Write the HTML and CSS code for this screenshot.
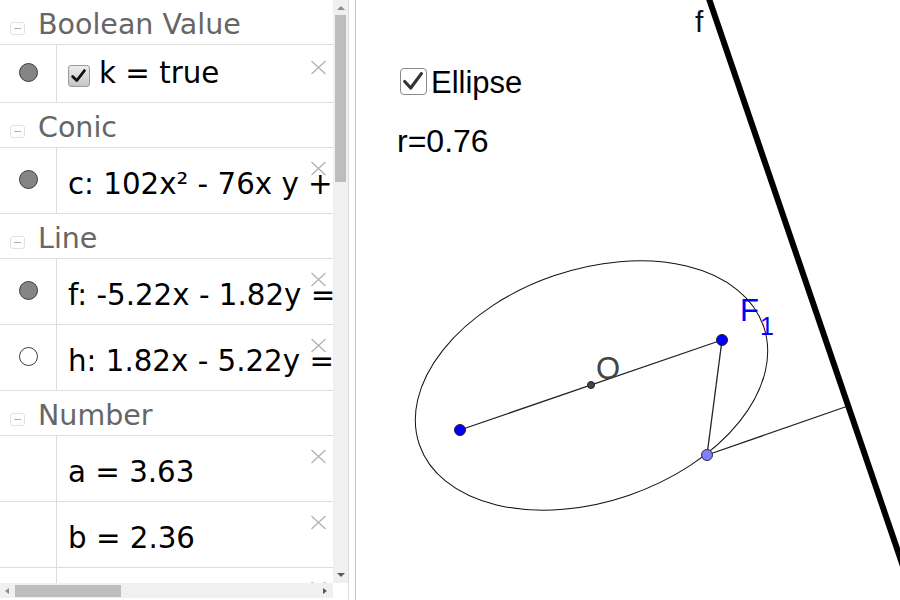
FILE: index.html
```html
<!DOCTYPE html>
<html>
<head>
<meta charset="utf-8">
<link rel="stylesheet" href="styles.css">
</head>
<body>
<div class="app">
  <div class="algebra">
    <div class="av-main">
      <div class="av-list">
        <div class="group-head"><span class="toggle"></span><span class="group-title">Boolean Value</span></div>
        <div class="item short">
          <div class="marble-cell"><span class="marble"></span></div>
          <div class="item-body">
            <span class="av-check"><svg viewBox="0 0 22 22" width="20" height="20"><path d="M4 11.5 L8.5 16 L17 5" fill="none" stroke="#111" stroke-width="3" stroke-linecap="round" stroke-linejoin="round"/></svg></span>
            <span class="expr">k = true</span>
          </div>
          <svg class="close" viewBox="0 0 17 15"><path d="M1.5 1 L15.5 14 M15.5 1 L1.5 14" stroke="#b4b4b4" stroke-width="1.4"/></svg>
        </div>
        <div class="group-head"><span class="toggle"></span><span class="group-title">Conic</span></div>
        <div class="item">
          <div class="marble-cell"><span class="marble"></span></div>
          <div class="item-body"><span class="expr">c: 102x² - 76x y + 128y² = 15920</span></div>
          <svg class="close" viewBox="0 0 17 15"><path d="M1.5 1 L15.5 14 M15.5 1 L1.5 14" stroke="#b4b4b4" stroke-width="1.4"/></svg>
        </div>
        <div class="group-head"><span class="toggle"></span><span class="group-title">Line</span></div>
        <div class="item">
          <div class="marble-cell"><span class="marble"></span></div>
          <div class="item-body"><span class="expr">f: -5.22x - 1.82y = -46.18</span></div>
          <svg class="close" viewBox="0 0 17 15"><path d="M1.5 1 L15.5 14 M15.5 1 L1.5 14" stroke="#b4b4b4" stroke-width="1.4"/></svg>
        </div>
        <div class="item">
          <div class="marble-cell"><span class="marble hollow"></span></div>
          <div class="item-body"><span class="expr">h: 1.82x - 5.22y = -20.95</span></div>
          <svg class="close" viewBox="0 0 17 15"><path d="M1.5 1 L15.5 14 M15.5 1 L1.5 14" stroke="#b4b4b4" stroke-width="1.4"/></svg>
        </div>
        <div class="group-head"><span class="toggle"></span><span class="group-title">Number</span></div>
        <div class="item">
          <div class="marble-cell"></div>
          <div class="item-body"><span class="expr">a = 3.63</span></div>
          <svg class="close" viewBox="0 0 17 15"><path d="M1.5 1 L15.5 14 M15.5 1 L1.5 14" stroke="#b4b4b4" stroke-width="1.4"/></svg>
        </div>
        <div class="item">
          <div class="marble-cell"></div>
          <div class="item-body"><span class="expr">b = 2.36</span></div>
          <svg class="close" viewBox="0 0 17 15"><path d="M1.5 1 L15.5 14 M15.5 1 L1.5 14" stroke="#b4b4b4" stroke-width="1.4"/></svg>
        </div>
        <div class="item">
          <div class="marble-cell"></div>
          <div class="item-body"><span class="expr">r = 0.76</span></div>
          <svg class="close" viewBox="0 0 17 15"><path d="M1.5 1 L15.5 14 M15.5 1 L1.5 14" stroke="#b4b4b4" stroke-width="1.4"/></svg>
        </div>
      </div>
      <div class="vscroll">
        <span class="arrow-up"></span>
        <span class="vthumb"></span>
        <span class="vspace"></span>
        <span class="arrow-down"></span>
      </div>
    </div>
    <div class="av-bottom">
      <div class="hscroll">
        <span class="arrow-left"></span>
        <span class="hthumb"></span>
        <span class="hspace"></span>
        <span class="arrow-right"></span>
      </div>
      <div class="corner"></div>
    </div>
  </div>
  <div class="splitter"></div>
  <div class="graphics">
    <svg class="canvas" viewBox="356 0 544 600" width="544" height="600">
      <ellipse cx="591.5" cy="385.5" rx="182" ry="116" transform="rotate(-19 591.5 385.5)" fill="none" stroke="#111" stroke-width="1"/>
      <line x1="460" y1="430" x2="722" y2="340" stroke="#222" stroke-width="1.3"/>
      <line x1="722" y1="340" x2="707" y2="455" stroke="#222" stroke-width="1.3"/>
      <line x1="707" y1="455" x2="848" y2="406" stroke="#222" stroke-width="1.3"/>
      <line x1="706" y1="-10" x2="905" y2="572" stroke="#000" stroke-width="6"/>
      <text class="lbl" x="695" y="32" font-size="30" fill="#111">f</text>
      <text class="lbl" x="596" y="379" font-size="31" fill="#444">O</text>
      <text class="lbl" x="740" y="321" font-size="31" fill="#0000ff">F</text>
      <text class="lbl" x="760" y="335" font-size="25" fill="#0000ff">1</text>
      <circle cx="591" cy="385" r="3.5" fill="#444" stroke="#222" stroke-width="1"/>
      <circle cx="460" cy="430" r="5.5" fill="#0000ff" stroke="#222" stroke-width="1"/>
      <circle cx="722" cy="340" r="5.5" fill="#0000ff" stroke="#222" stroke-width="1"/>
      <circle cx="707" cy="455" r="5.5" fill="#7f7fff" stroke="#333" stroke-width="1"/>
    </svg>
    <div class="gv-check">
      <span class="gv-box"><svg viewBox="0 0 27 27" width="25" height="25"><path d="M4 13.5 L10.5 20.5 L22 5" fill="none" stroke="#333" stroke-width="3.4" stroke-linecap="round" stroke-linejoin="round"/></svg></span>
      <span class="gv-text">Ellipse</span>
    </div>
    <div class="gv-caption">r=0.76</div>
  </div>
</div>
</body>
</html>
```

FILE: styles.css
```css
* { box-sizing: border-box; }
html, body {
  margin: 0;
  padding: 0;
  width: 900px;
  height: 600px;
  overflow: hidden;
  background: #fff;
}
.app {
  display: flex;
  height: 600px;
}
.algebra {
  width: 349px;
  height: 600px;
  border-right: 1px solid #dcdcdc;
  display: flex;
  flex-direction: column;
  font-family: "DejaVu Sans", sans-serif;
}
.av-main {
  display: flex;
  height: 583px;
}
.av-list {
  width: 333px;
  height: 583px;
  overflow: hidden;
}
.group-head {
  height: 45px;
  border-bottom: 1px solid #dddddd;
  display: flex;
  align-items: flex-start;
  padding: 9px 0 0 10px;
}
.toggle {
  width: 15px;
  height: 13px;
  margin-top: 13px;
  border: 1px solid #e2e2e2;
  border-radius: 3px;
}
.toggle::before {
  content: "";
  display: block;
  width: 7px;
  height: 1px;
  background: #b0b0b0;
  margin: 5px auto 0;
}
.group-title {
  margin-left: 13px;
  font-size: 28.5px;
  line-height: 32px;
  color: #666666;
  white-space: nowrap;
}
.item {
  height: 66px;
  border-bottom: 1px solid #dddddd;
  display: flex;
  position: relative;
}
.item.short { height: 58px; }
.marble-cell {
  width: 57px;
  flex: none;
  border-right: 1px solid #dddddd;
  display: flex;
  align-items: center;
  justify-content: center;
  padding-bottom: 2px;
}
.marble {
  width: 19px;
  height: 19px;
  border-radius: 50%;
  background: #858585;
  border: 1px solid #3c3c3c;
}
.marble.hollow { background: #ffffff; }
.item-body {
  flex: 1;
  min-width: 0;
  padding: 19px 0 0 11px;
  display: flex;
  align-items: flex-start;
  white-space: nowrap;
  overflow: hidden;
  font-size: 29.3px;
  line-height: 34px;
  color: #000;
}
.item.short .item-body { padding-top: 11px; }
.av-check {
  flex: none;
  width: 22px;
  height: 22px;
  margin-top: 9px;
  margin-right: 9px;
  border: 1px solid #9a9a9a;
  border-radius: 3px;
  background: linear-gradient(#ececec, #c6c6c6);
  display: flex;
}
.close {
  position: absolute;
  right: 6px;
  top: 13px;
  width: 17px;
  height: 15px;
}
.item.short .close { top: 15px; }

.vscroll {
  width: 15px;
  height: 583px;
  background: #f0f0f0;
  display: flex;
  flex-direction: column;
  align-items: center;
}
.arrow-up {
  margin-top: 6px;
  width: 0;
  height: 0;
  border-left: 4px solid transparent;
  border-right: 4px solid transparent;
  border-bottom: 4px solid #8c8c8c;
}
.vthumb {
  margin-top: 5px;
  width: 11px;
  height: 167px;
  background: #bdbdbd;
}
.vspace { flex: 1; }
.arrow-down {
  margin-bottom: 6px;
  width: 0;
  height: 0;
  border-left: 4px solid transparent;
  border-right: 4px solid transparent;
  border-top: 4px solid #5a5a5a;
}
.av-bottom {
  display: flex;
  height: 15px;
}
.hscroll {
  width: 333px;
  height: 15px;
  background: #f0f0f0;
  display: flex;
  align-items: center;
}
.arrow-left {
  margin-left: 5px;
  width: 0;
  height: 0;
  border-top: 3.5px solid transparent;
  border-bottom: 3.5px solid transparent;
  border-right: 4px solid #8c8c8c;
}
.hthumb {
  margin-left: 6px;
  width: 106px;
  height: 12px;
  background: #bdbdbd;
}
.hspace { flex: 1; }
.arrow-right {
  margin-right: 6px;
  width: 0;
  height: 0;
  border-top: 3.5px solid transparent;
  border-bottom: 3.5px solid transparent;
  border-left: 4px solid #5a5a5a;
}
.corner {
  width: 15px;
  height: 15px;
  background: #ffffff;
}

.splitter {
  width: 6px;
  flex: none;
}
.graphics {
  flex: 1;
  position: relative;
  border-left: 1px solid #c8c8c8;
  overflow: hidden;
  font-family: "Liberation Sans", Arial, sans-serif;
}
.canvas {
  position: absolute;
  left: 0;
  top: 0;
  display: block;
}
.lbl { font-family: "Liberation Sans", Arial, sans-serif; }
.gv-check {
  position: absolute;
  left: 44px;
  top: 66px;
  display: flex;
  align-items: flex-start;
}
.gv-box {
  width: 27px;
  height: 27px;
  margin-top: 2px;
  margin-right: 4px;
  border: 1.5px solid #8a8a8a;
  border-radius: 4px;
  background: #fff;
  display: flex;
}
.gv-text {
  font-size: 31px;
  line-height: 34px;
  color: #000;
}
.gv-caption {
  position: absolute;
  left: 41px;
  top: 123px;
  font-size: 32px;
  line-height: 36px;
  color: #000;
}
```
